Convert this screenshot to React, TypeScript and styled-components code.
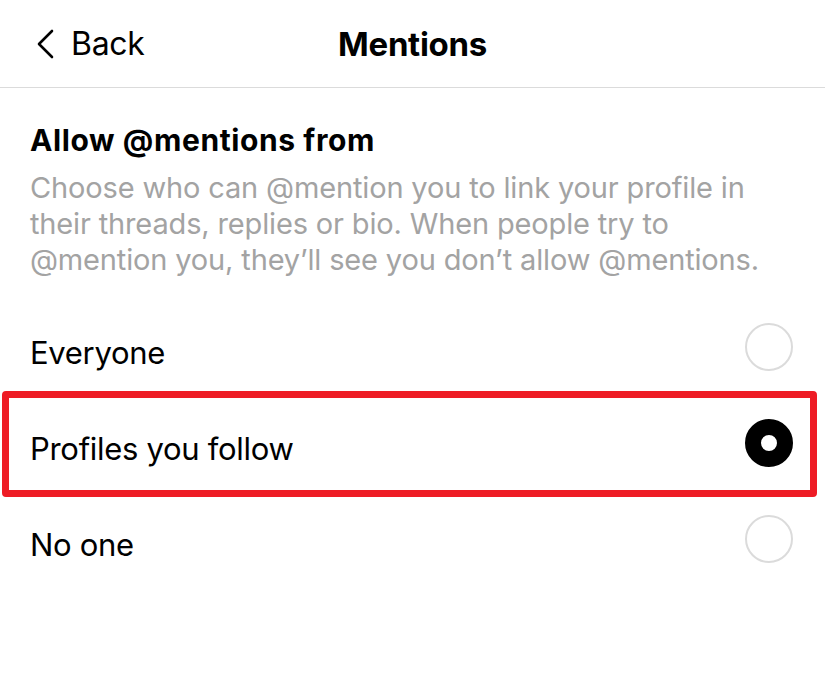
import React, { useState } from 'react';
import styled, { createGlobalStyle } from 'styled-components';

const GlobalStyle = createGlobalStyle`
  html, body {
    margin: 0;
    padding: 0;
    background: #ffffff;
  }
  body {
    font-family: Inter, Roboto, "Liberation Sans", sans-serif;
    color: #000000;
    -webkit-font-smoothing: antialiased;
  }
`;

const Screen = styled.div`
  width: 825px;
  min-height: 682px;
  background: #ffffff;
`;

const Header = styled.header`
  height: 88px;
  display: grid;
  grid-template-columns: 1fr auto 1fr;
  align-items: center;
  border-bottom: 1.5px solid #dbdbdb;
  box-sizing: border-box;
`;

const BackButton = styled.button`
  justify-self: start;
  display: flex;
  align-items: center;
  gap: 15px;
  padding: 0 0 0 36px;
  background: none;
  border: none;
  font-family: inherit;
  font-size: 32px;
  letter-spacing: -0.3px;
  color: #000000;
  cursor: pointer;
`;

const Title = styled.h1`
  margin: 0;
  font-size: 33px;
  font-weight: 700;
  letter-spacing: -0.3px;
`;

const Section = styled.section`
  padding: 34px 30px 0;
`;

const Heading = styled.h2`
  margin: 0;
  font-size: 30px;
  font-weight: 700;
  line-height: 36px;
  letter-spacing: 0.6px;
`;

const Description = styled.p`
  margin: 12px 0 0;
  font-size: 29px;
  line-height: 36px;
  letter-spacing: -0.15px;
  color: #a3a3a3;
`;

const Options = styled.div`
  margin-top: 21px;
  display: flex;
  flex-direction: column;
`;

const Row = styled.label<{ $highlighted?: boolean }>`
  position: relative;
  height: 96px;
  display: flex;
  align-items: center;
  justify-content: space-between;
  padding: 0 32px 0 30px;
  font-size: 31px;
  letter-spacing: -0.3px;
  cursor: pointer;

  ${({ $highlighted }) =>
    $highlighted &&
    `
    &::after {
      content: '';
      position: absolute;
      left: 2px;
      right: 8px;
      top: -4px;
      bottom: -6px;
      border: 7px solid #ee1c25;
      border-radius: 4px;
      pointer-events: none;
    }
  `}
`;

const RowLabel = styled.span`
  padding-top: 10px;
`;

const Radio = styled.span<{ $checked: boolean }>`
  width: 48px;
  height: 48px;
  box-sizing: border-box;
  border-radius: 50%;
  border: ${({ $checked }) => ($checked ? '16px solid #000000' : '2.5px solid #dbdbdb')};
  background: #ffffff;
`;

const options = ['Everyone', 'Profiles you follow', 'No one'];

export default function App() {
  const [selected, setSelected] = useState('Profiles you follow');

  return (
    <Screen>
      <GlobalStyle />
      <Header>
        <BackButton>
          <svg width="20" height="30" viewBox="0 0 20 30" fill="none">
            <path d="M16 2 L3 15 L16 28" stroke="#000" strokeWidth="2.6" strokeLinecap="round" strokeLinejoin="round" />
          </svg>
          Back
        </BackButton>
        <Title>Mentions</Title>
        <div />
      </Header>
      <Section>
        <Heading>Allow @mentions from</Heading>
        <Description>
          Choose who can @mention you to link your profile in
          <br />
          their threads, replies or bio. When people try to
          <br />
          @mention you, they’ll see you don’t allow @mentions.
        </Description>
      </Section>
      <Options>
        {options.map((opt) => (
          <Row key={opt} $highlighted={opt === 'Profiles you follow'} onClick={() => setSelected(opt)}>
            <RowLabel>{opt}</RowLabel>
            <Radio $checked={selected === opt} />
          </Row>
        ))}
      </Options>
    </Screen>
  );
}
